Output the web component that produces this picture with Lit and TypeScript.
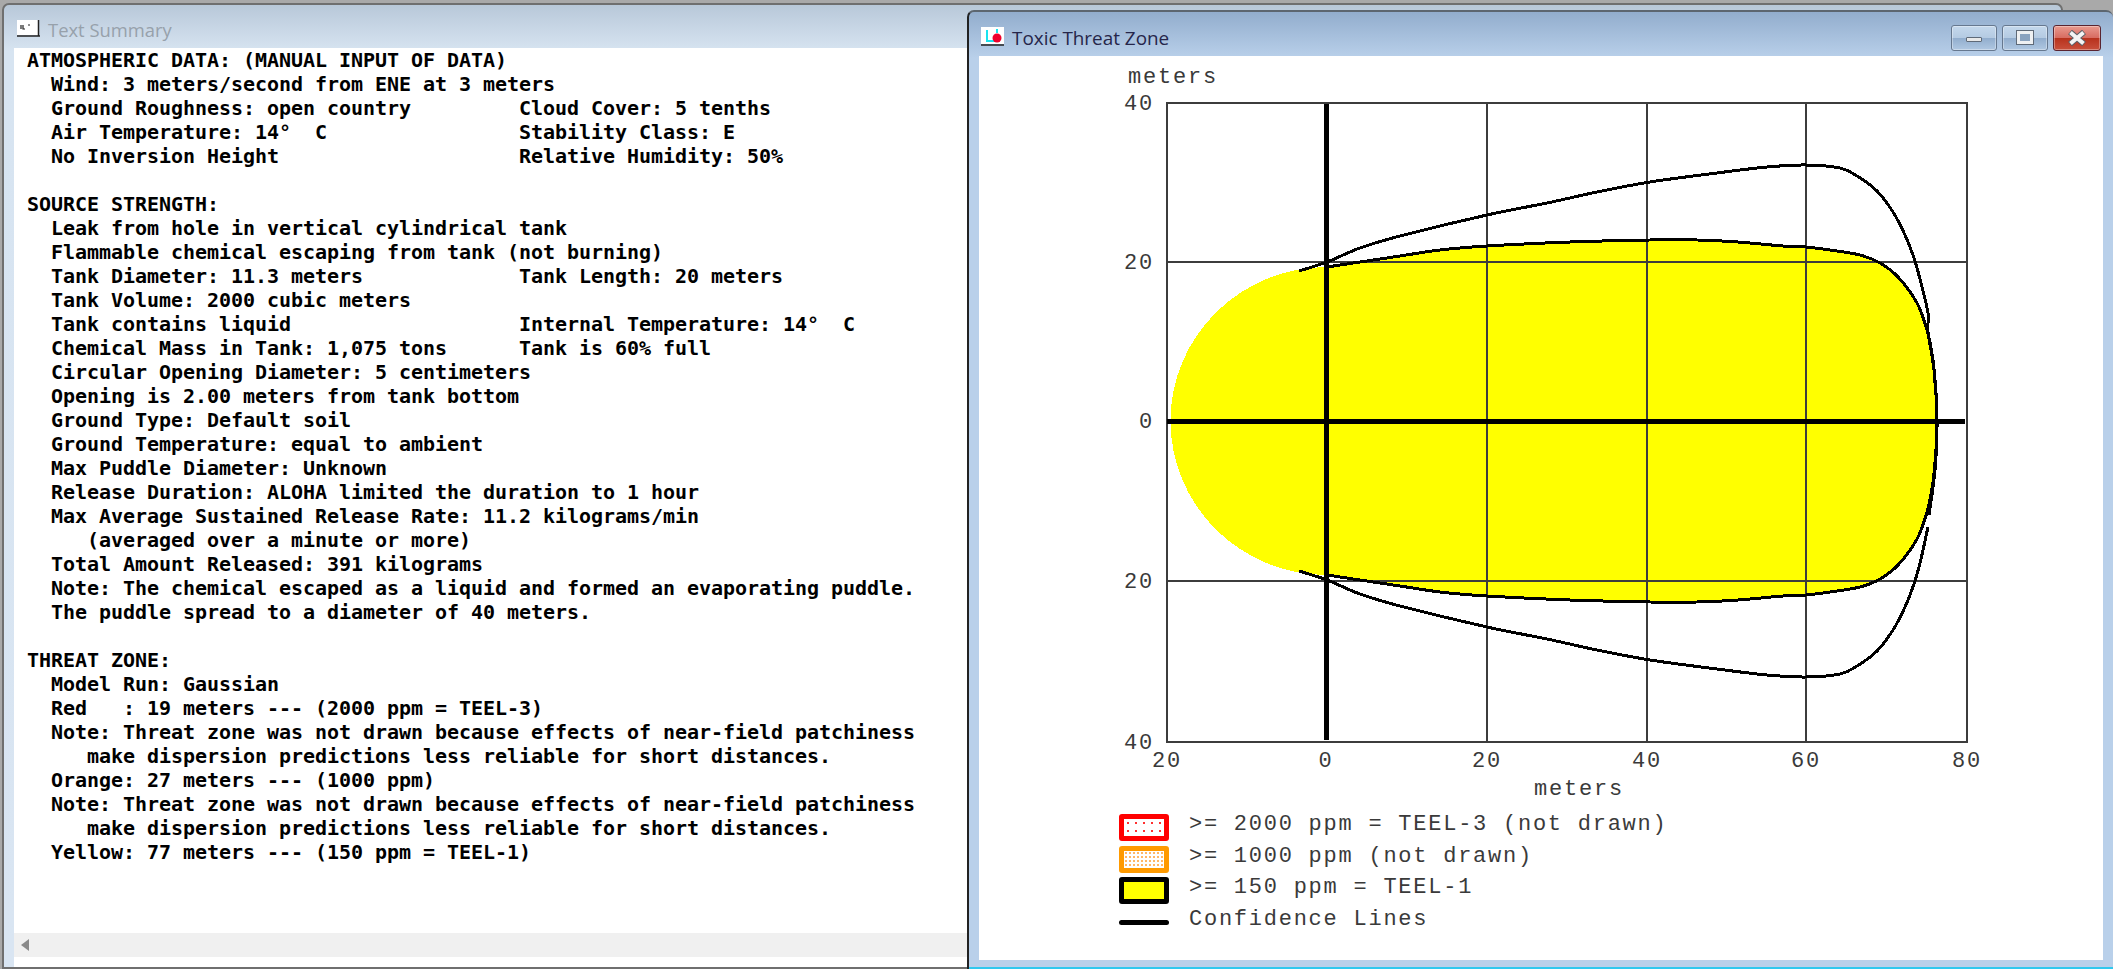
import { LitElement, css, html, svg } from 'lit'
import { customElement, property } from 'lit/decorators.js'

type Pt = [number, number]

const SUMMARY = `ATMOSPHERIC DATA: (MANUAL INPUT OF DATA)
  Wind: 3 meters/second from ENE at 3 meters
  Ground Roughness: open country         Cloud Cover: 5 tenths
  Air Temperature: 14°  C                Stability Class: E
  No Inversion Height                    Relative Humidity: 50%

SOURCE STRENGTH:
  Leak from hole in vertical cylindrical tank
  Flammable chemical escaping from tank (not burning)
  Tank Diameter: 11.3 meters             Tank Length: 20 meters
  Tank Volume: 2000 cubic meters
  Tank contains liquid                   Internal Temperature: 14°  C
  Chemical Mass in Tank: 1,075 tons      Tank is 60% full
  Circular Opening Diameter: 5 centimeters
  Opening is 2.00 meters from tank bottom
  Ground Type: Default soil
  Ground Temperature: equal to ambient
  Max Puddle Diameter: Unknown
  Release Duration: ALOHA limited the duration to 1 hour
  Max Average Sustained Release Rate: 11.2 kilograms/min
     (averaged over a minute or more)
  Total Amount Released: 391 kilograms
  Note: The chemical escaped as a liquid and formed an evaporating puddle.
  The puddle spread to a diameter of 40 meters.

THREAT ZONE:
  Model Run: Gaussian
  Red   : 19 meters --- (2000 ppm = TEEL-3)
  Note: Threat zone was not drawn because effects of near-field patchiness
     make dispersion predictions less reliable for short distances.
  Orange: 27 meters --- (1000 ppm)
  Note: Threat zone was not drawn because effects of near-field patchiness
     make dispersion predictions less reliable for short distances.
  Yellow: 77 meters --- (150 ppm = TEEL-1)`

// screen coordinates, the svg viewBox starts at the client corner so they can be read off directly
// the plume is symmetric about the centre line, only the upper half is listed
const CENTER_Y = 421
const mirror = (pts: Pt[]): Pt[] => pts.map(([x, y]) => [x, 2 * CENTER_Y - y] as Pt).reverse()

const ZONE_TOP: Pt[] = [
  [1327, 267], [1360, 262], [1400, 256], [1440, 250], [1487, 246], [1570, 242], [1650, 240], [1697, 240], [1738, 242],
  [1783, 246], [1806, 247], [1830, 250], [1860, 255], [1880, 263], [1898, 277], [1917, 303], [1927, 330], [1933, 360],
  [1936, 393], [1937, 421],
]
const ZONE_RIGHT: Pt[] = [...ZONE_TOP, ...mirror(ZONE_TOP).slice(1)]

const CONF_UPPER: Pt[] = [
  [1299, 271], [1327, 262], [1360, 248], [1400, 236], [1487, 215], [1547, 203], [1597, 192], [1650, 182], [1717, 173],
  [1767, 167], [1806, 165], [1840, 168], [1857, 176], [1877, 191], [1893, 212], [1905, 235], [1914, 258], [1921, 283],
  [1928, 313],
]
const CONF_TOP: Pt[] = [...CONF_UPPER, [1928, 332], [1934, 370], [1937, 421], [1935, 470], [1929, 515]]
const CONF_BOTTOM: Pt[] = mirror(CONF_UPPER.slice(0, -1).concat([[1928, 315]]))

// catmull-rom through the points
function smooth(pts: Pt[], join = false) {
  let d = `${join ? 'L' : 'M'}${pts[0][0]} ${pts[0][1]}`
  for (let i = 0; i < pts.length - 1; i++) {
    const p0 = pts[Math.max(i - 1, 0)]
    const p1 = pts[i]
    const p2 = pts[i + 1]
    const p3 = pts[Math.min(i + 2, pts.length - 1)]
    const c1x = p1[0] + (p2[0] - p0[0]) / 6
    const c1y = p1[1] + (p2[1] - p0[1]) / 6
    const c2x = p2[0] - (p3[0] - p1[0]) / 6
    const c2y = p2[1] - (p3[1] - p1[1]) / 6
    d += `C${c1x.toFixed(1)} ${c1y.toFixed(1)} ${c2x.toFixed(1)} ${c2y.toFixed(1)} ${p2[0]} ${p2[1]}`
  }
  return d
}

const X_TICKS: [number, string][] = [[1167, '20'], [1326, '0'], [1487, '20'], [1647, '40'], [1806, '60'], [1967, '80']]
const Y_TICKS: [number, string][] = [[103, '40'], [262, '20'], [421, '0'], [581, '20'], [742, '40']]

@customElement('app-window')
export class AppWindow extends LitElement {
  @property() heading = ''
  @property({ type: Boolean, reflect: true }) active = false

  render() {
    return html`
      <div class="frame">
        <div class="titlebar">
          <slot name="icon"></slot>
          <span class="heading">${this.heading}</span>
          ${this.active
            ? html`<div class="buttons">
                <div class="btn"><span class="min"></span></div>
                <div class="btn"><span class="max"></span></div>
                <div class="btn close">
                  <svg width="22" height="16" viewBox="0 0 22 16">
                    <path d="M4 2 L18 14 M18 2 L4 14" stroke="#5b5f66" stroke-width="6" />
                    <path d="M4.5 2.5 L17.5 13.5 M17.5 2.5 L4.5 13.5" stroke="#f4f4f4" stroke-width="4" />
                  </svg>
                </div>
              </div>`
            : ''}
        </div>
        <div class="client"><slot></slot></div>
      </div>
    `
  }

  static styles = css`
    :host {
      display: block;
    }
    .frame {
      box-sizing: border-box;
      height: 100%;
      display: flex;
      flex-direction: column;
      border: 2px solid #6f6f6f;
      border-radius: 7px 7px 0 0;
      padding: 0 10px 0 10px;
      background: linear-gradient(#b8c8d9 0, #d7e4f1 46px, #d9e5f2 100%);
    }
    :host([active]) .frame {
      border-color: #222;
      border-top-color: #5c6670;
      border-right: 0;
      border-bottom: 0;
      padding: 0 10px 9px 10px;
      background: linear-gradient(#92adcd 0, #b9d0ea 46px, #b9d0ea 100%);
      box-shadow: inset 0 -2px 0 #2fc8ee;
    }
    .titlebar {
      height: 43px;
      flex: none;
      display: flex;
      align-items: center;
      gap: 8px;
      padding-top: 4px;
      box-sizing: border-box;
    }
    :host([active]) .titlebar {
      height: 44px;
      padding-top: 0;
      align-items: flex-end;
    }
    .heading {
      font: 18.4px 'Open Sans', 'Noto Sans', sans-serif;
      color: #97a1ab;
      position: relative;
      top: 1px;
    }
    :host([active]) .heading {
      font-size: 18.9px;
      color: #26264a;
      top: -5px;
    }
    .buttons {
      margin-left: auto;
      margin-right: 2px;
      align-self: flex-start;
      margin-top: 13px;
      display: flex;
      gap: 5px;
    }
    .btn {
      box-sizing: border-box;
      width: 46px;
      height: 26px;
      display: flex;
      align-items: center;
      justify-content: center;
      border: 1px solid #66788f;
      border-radius: 3px;
      background: linear-gradient(#c4d8ec 0, #b4cae2 50%, #92aece 52%, #b0c8e2 100%);
      box-shadow: inset 0 0 0 1px rgba(255, 255, 255, 0.35);
    }
    .close {
      width: 48px;
      border-color: #5a2430;
      background: linear-gradient(#e99a8f 0, #d76b60 50%, #b8321d 52%, #c9503c 100%);
    }
    .min {
      width: 16px;
      height: 5px;
      margin-top: 3px;
      background: #e8e8e8;
      border: 1px solid #5f6a78;
      border-radius: 1px;
      box-sizing: border-box;
    }
    .max {
      width: 16px;
      height: 13px;
      margin-top: -2px;
      box-sizing: border-box;
      border: 3px solid #eef0f2;
      outline: 1px solid #5f6a78;
      background: #8aa3bf;
    }
    .client {
      flex: 1;
      min-height: 0;
      background: #fff;
      display: flex;
      flex-direction: column;
    }
  `
}

@customElement('app-root')
export class AppRoot extends LitElement {
  chart() {
    // the back of the plume is an ellipse round the source
    const fill = `M1327 575A156.5 154 0 0 1 1327 267${smooth(ZONE_RIGHT, true)}Z`
    return svg`
      <path class="zone" d=${fill} />
      <rect class="grid" x="1167" y="103" width="800" height="639" />
      ${X_TICKS.slice(2, 5).map(([x]) => svg`<line class="grid" x1=${x} x2=${x} y1="103" y2="742" />`)}
      ${Y_TICKS.slice(1, 4).filter(([, t]) => t !== '0').map(([y]) => svg`<line class="grid" x1="1167" x2="1967" y1=${y} y2=${y} />`)}
      <line class="axis" x1="1326.5" x2="1326.5" y1="104" y2="740" />
      <line class="axis" x1="1167" x2="1965" y1="421" y2="421" />
      <path class="edge" d=${smooth(ZONE_RIGHT)} />
      <path class="conf" d=${smooth(CONF_TOP)} />
      <path class="conf" d=${smooth(CONF_BOTTOM)} />
      ${X_TICKS.map(([x, t]) => svg`<text class="tick mid" x=${x} y="767">${t}</text>`)}
      ${Y_TICKS.map(([y, t]) => svg`<text class="tick end" x="1154" y=${y + 7}>${t}</text>`)}
      <text class="tick" x="1128" y="83">meters</text>
      <text class="tick" x="1534" y="795">meters</text>
    `
  }

  render() {
    return html`
      <app-window class="summary" heading="Text Summary">
        <svg slot="icon" class="icon" width="23" height="17" viewBox="0 0 23 17">
          <rect width="22" height="15" fill="#fff" />
          <path d="M21.5 0V16M0 16H23" stroke="#222" stroke-width="1.5" />
          <path d="M4 5V9M6 5V9H8M11 5H13" stroke="#222" stroke-width="1.2" fill="none" />
        </svg>
        <pre class="text">${SUMMARY}</pre>
        <div class="scrollbar"><span class="arrow"></span></div>
      </app-window>

      <app-window class="threat" heading="Toxic Threat Zone" active>
        <svg slot="icon" class="icon threat-icon" width="23" height="19" viewBox="0 0 23 19">
          <rect width="23" height="17" fill="#fff" />
          <path d="M6 3V14H16M16 2V6" stroke="#19e3ef" stroke-width="2" fill="none" />
          <circle cx="16" cy="11" r="4.5" fill="#f0002c" />
          <path d="M0 18H23" stroke="#222" stroke-width="1.5" />
        </svg>
        <svg class="chart" viewBox="979 56 1124 758" width="1124" height="758">${this.chart()}</svg>
        <div class="legend">
          <span class="swatch red"></span><span class="label">&gt;= 2000 ppm = TEEL-3 (not drawn)</span>
          <span class="swatch orange"></span><span class="label">&gt;= 1000 ppm (not drawn)</span>
          <span class="swatch yellow"></span><span class="label">&gt;= 150 ppm = TEEL-1</span>
          <span class="swatch line"></span><span class="label">Confidence Lines</span>
        </div>
      </app-window>
    `
  }

  static styles = css`
    :host {
      display: block;
      position: relative;
      width: 2113px;
      height: 969px;
      overflow: hidden;
      background: #a9a9a9;
    }
    app-window {
      position: absolute;
    }
    .summary {
      left: 2px;
      top: 3px;
      width: 2061px;
      height: 966px;
    }
    .threat {
      left: 967px;
      top: 10px;
      width: 1146px;
      height: 959px;
    }
    .icon {
      flex: none;
      margin-left: 3px;
    }
    .threat-icon {
      margin-left: 2px;
      margin-bottom: 10px;
    }
    .text {
      flex: 1;
      margin: 0;
      padding: 0 0 0 13px;
      font: bold 20px/24px 'DejaVu Sans Mono', 'Liberation Mono', monospace;
      letter-spacing: -0.04px;
      color: #000;
      overflow: hidden;
    }
    .scrollbar {
      height: 24px;
      flex: none;
      background: #f0f0f0;
      display: flex;
      align-items: center;
      padding-left: 7px;
      margin-bottom: 10px;
    }
    .arrow {
      width: 0;
      height: 0;
      border-style: solid;
      border-width: 6px 8px 6px 0;
      border-color: transparent #8a8a8a transparent transparent;
    }
    .chart {
      display: block;
      flex: none;
    }
    .zone {
      fill: #ffff00;
      shape-rendering: crispEdges;
    }
    .grid {
      fill: none;
      stroke: #3c3c3c;
      stroke-width: 2;
      shape-rendering: crispEdges;
    }
    .axis {
      stroke: #000;
      stroke-width: 5;
      shape-rendering: crispEdges;
    }
    .edge,
    .conf {
      fill: none;
      stroke: #000;
      stroke-width: 3;
      shape-rendering: crispEdges;
    }
    .tick {
      font: 22px 'Liberation Mono', monospace;
      letter-spacing: 1.8px;
      fill: #3a3a3a;
    }
    .mid {
      text-anchor: middle;
    }
    .end {
      text-anchor: end;
    }
    .legend {
      display: grid;
      grid-template-columns: 50px auto;
      grid-auto-rows: 27px;
      row-gap: 4.5px;
      column-gap: 20px;
      align-items: center;
      justify-content: start;
      padding-left: 140px;
      font: 22px 'Liberation Mono', monospace;
      letter-spacing: 1.75px;
      color: #3a3a3a;
    }
    .label {
      margin-top: -6px;
    }
    .swatch {
      box-sizing: border-box;
      width: 50px;
      height: 27px;
      border: 5px solid #000;
      border-radius: 3px;
    }
    .red {
      border-color: #ff0000;
      background: radial-gradient(circle, #ff3030 1px, transparent 1.2px) 0 0 / 8px 8px #fff;
    }
    .orange {
      border-color: #ff9a00;
      background: radial-gradient(circle, #ffb766 1.2px, transparent 1.5px) 0 0 / 4px 4px #fff;
    }
    .yellow {
      background: #ffff00;
    }
    .line {
      height: 5px;
      border: 0;
      background: #000;
    }
  `
}
